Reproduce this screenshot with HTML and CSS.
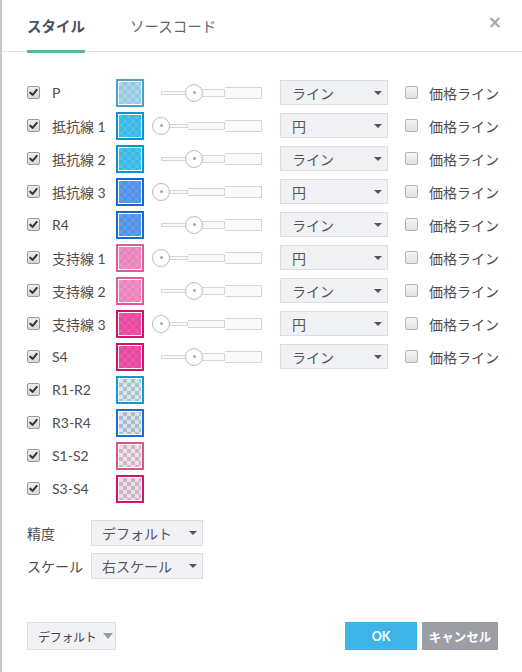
FILE: index.html
```html
<!DOCTYPE html>
<html lang="ja">
<head>
  <meta charset="UTF-8" />
  <title>スタイル</title>
  <link rel="stylesheet" href="styles.css">
</head>
<body>
  <div class="dialog">
    <div class="header">
      <div class="tab active">スタイル</div>
      <div class="tab">ソースコード</div>
      <div class="close">×</div>
    </div>

    <div class="content">
      <div class="rows">
        <!-- P -->
        <span class="cb on"><svg viewBox="0 0 12 12"><path d="M2.5 6.2 L5 8.6 L9.6 3.2" /></svg></span>
        <span class="label">P</span>
        <span class="swatch sw-p"></span>
        <div class="slider"><div class="track"><i class="s1"></i><i class="s2"></i><i class="s3"></i></div><span class="thumb mid"></span></div>
        <div class="select">ライン<span class="caret"></span></div>
        <span></span>
        <span class="cb"></span>
        <span class="label">価格ライン</span>

        <!-- 抵抗線 1 -->
        <span class="cb on"><svg viewBox="0 0 12 12"><path d="M2.5 6.2 L5 8.6 L9.6 3.2" /></svg></span>
        <span class="label">抵抗線 1</span>
        <span class="swatch sw-r"></span>
        <div class="slider"><div class="track"><i class="s1"></i><i class="s2"></i><i class="s3"></i></div><span class="thumb"></span></div>
        <div class="select">円<span class="caret"></span></div>
        <span></span>
        <span class="cb"></span>
        <span class="label">価格ライン</span>

        <!-- 抵抗線 2 -->
        <span class="cb on"><svg viewBox="0 0 12 12"><path d="M2.5 6.2 L5 8.6 L9.6 3.2" /></svg></span>
        <span class="label">抵抗線 2</span>
        <span class="swatch sw-r"></span>
        <div class="slider"><div class="track"><i class="s1"></i><i class="s2"></i><i class="s3"></i></div><span class="thumb mid"></span></div>
        <div class="select">ライン<span class="caret"></span></div>
        <span></span>
        <span class="cb"></span>
        <span class="label">価格ライン</span>

        <!-- 抵抗線 3 -->
        <span class="cb on"><svg viewBox="0 0 12 12"><path d="M2.5 6.2 L5 8.6 L9.6 3.2" /></svg></span>
        <span class="label">抵抗線 3</span>
        <span class="swatch sw-r3"></span>
        <div class="slider"><div class="track"><i class="s1"></i><i class="s2"></i><i class="s3"></i></div><span class="thumb"></span></div>
        <div class="select">円<span class="caret"></span></div>
        <span></span>
        <span class="cb"></span>
        <span class="label">価格ライン</span>

        <!-- R4 -->
        <span class="cb on"><svg viewBox="0 0 12 12"><path d="M2.5 6.2 L5 8.6 L9.6 3.2" /></svg></span>
        <span class="label">R4</span>
        <span class="swatch sw-r3"></span>
        <div class="slider"><div class="track"><i class="s1"></i><i class="s2"></i><i class="s3"></i></div><span class="thumb mid"></span></div>
        <div class="select">ライン<span class="caret"></span></div>
        <span></span>
        <span class="cb"></span>
        <span class="label">価格ライン</span>

        <!-- 支持線 1 -->
        <span class="cb on"><svg viewBox="0 0 12 12"><path d="M2.5 6.2 L5 8.6 L9.6 3.2" /></svg></span>
        <span class="label">支持線 1</span>
        <span class="swatch sw-s"></span>
        <div class="slider"><div class="track"><i class="s1"></i><i class="s2"></i><i class="s3"></i></div><span class="thumb"></span></div>
        <div class="select">円<span class="caret"></span></div>
        <span></span>
        <span class="cb"></span>
        <span class="label">価格ライン</span>

        <!-- 支持線 2 -->
        <span class="cb on"><svg viewBox="0 0 12 12"><path d="M2.5 6.2 L5 8.6 L9.6 3.2" /></svg></span>
        <span class="label">支持線 2</span>
        <span class="swatch sw-s"></span>
        <div class="slider"><div class="track"><i class="s1"></i><i class="s2"></i><i class="s3"></i></div><span class="thumb mid"></span></div>
        <div class="select">ライン<span class="caret"></span></div>
        <span></span>
        <span class="cb"></span>
        <span class="label">価格ライン</span>

        <!-- 支持線 3 -->
        <span class="cb on"><svg viewBox="0 0 12 12"><path d="M2.5 6.2 L5 8.6 L9.6 3.2" /></svg></span>
        <span class="label">支持線 3</span>
        <span class="swatch sw-s3"></span>
        <div class="slider"><div class="track"><i class="s1"></i><i class="s2"></i><i class="s3"></i></div><span class="thumb"></span></div>
        <div class="select">円<span class="caret"></span></div>
        <span></span>
        <span class="cb"></span>
        <span class="label">価格ライン</span>

        <!-- S4 -->
        <span class="cb on"><svg viewBox="0 0 12 12"><path d="M2.5 6.2 L5 8.6 L9.6 3.2" /></svg></span>
        <span class="label">S4</span>
        <span class="swatch sw-s3"></span>
        <div class="slider"><div class="track"><i class="s1"></i><i class="s2"></i><i class="s3"></i></div><span class="thumb mid"></span></div>
        <div class="select">ライン<span class="caret"></span></div>
        <span></span>
        <span class="cb"></span>
        <span class="label">価格ライン</span>

        <!-- fills -->
        <span class="cb on"><svg viewBox="0 0 12 12"><path d="M2.5 6.2 L5 8.6 L9.6 3.2" /></svg></span>
        <span class="label">R1-R2</span>
        <span class="swatch fill fill-r1"></span>
        <span class="rest"></span>

        <span class="cb on"><svg viewBox="0 0 12 12"><path d="M2.5 6.2 L5 8.6 L9.6 3.2" /></svg></span>
        <span class="label">R3-R4</span>
        <span class="swatch fill fill-r3"></span>
        <span class="rest"></span>

        <span class="cb on"><svg viewBox="0 0 12 12"><path d="M2.5 6.2 L5 8.6 L9.6 3.2" /></svg></span>
        <span class="label">S1-S2</span>
        <span class="swatch fill fill-s1"></span>
        <span class="rest"></span>

        <span class="cb on"><svg viewBox="0 0 12 12"><path d="M2.5 6.2 L5 8.6 L9.6 3.2" /></svg></span>
        <span class="label">S3-S4</span>
        <span class="swatch fill fill-s3"></span>
        <span class="rest"></span>
      </div>

      <div class="options">
        <span class="label">精度</span>
        <div class="select wide">デフォルト<span class="caret"></span></div>
        <span class="label">スケール</span>
        <div class="select wide">右スケール<span class="caret"></span></div>
      </div>
    </div>

    <div class="footer">
      <div class="btn-default">デフォルト<span class="caret light"></span></div>
      <div class="actions">
        <button class="btn ok">OK</button>
        <button class="btn cancel">キャンセル</button>
      </div>
    </div>
  </div>
</body>
</html>
```

FILE: styles.css
```css
body {
  margin: 0;
  font-family: Lato, "Noto Sans CJK JP", sans-serif;
  font-size: 14px;
  color: #4d4d4d;
  background: #fff;
}
.dialog {
  height: 672px;
  box-sizing: border-box;
  border-left: 2px solid #c6c6c6;
  display: flex;
  flex-direction: column;
}

/* header */
.header {
  height: 51px;
  border-bottom: 1px solid #e1e1e1;
  display: flex;
  align-items: stretch;
  padding: 0 20px 0 25px;
}
.tab {
  display: flex;
  align-items: center;
  padding-top: 1px;
  margin-right: 45px;
  font-size: 14.5px;
  color: #666;
  border-bottom: 3px solid transparent;
  margin-bottom: -2px;
}
.tab.active {
  font-weight: bold;
  color: #4a5262;
  border-bottom-color: #5ab98b;
}
.close {
  margin-left: auto;
  margin-top: 12px;
  font-size: 17px;
  font-weight: bold;
  color: #a8a8a8;
  font-family: "DejaVu Sans", sans-serif;
}

/* rows */
.content {
  padding: 24px 0 0 25px;
}
.rows {
  display: grid;
  grid-template-columns: 25px 64px 28px 136px 108px 17px 24px auto;
  grid-auto-rows: 33px;
  align-items: center;
}
.rest { grid-column: span 5; }
.label { white-space: nowrap; }

.cb {
  width: 11px;
  height: 11px;
  border: 1px solid #b4b4b4;
  border-radius: 2px;
  background: linear-gradient(#f4f4f4, #e2e2e2);
  display: block;
}
.cb.on { border-color: #9a9a9a; background: linear-gradient(#eee, #d8d8d8); }
.cb svg { display: block; width: 11px; height: 11px; }
.cb path {
  fill: none;
  stroke: #333;
  stroke-width: 2.2;
  stroke-linecap: round;
  stroke-linejoin: round;
}

.swatch {
  width: 28px;
  height: 28px;
  box-sizing: border-box;
  border: 2px solid var(--bd);
  padding: 1px;
  background-clip: content-box;
  background-color: var(--fill);
  background-image: conic-gradient(var(--sq) 25%, transparent 0 50%, var(--sq) 0 75%, transparent 0);
  background-size: 8px 8px;
  background-origin: content-box;
  outline: 1px solid #fff;
  outline-offset: -3px;
}
.sw-p  { --bd: #4aa0c8; --fill: #a6d7ec; --sq: rgba(0,0,0,0.07); }
.sw-r  { --bd: #0a93d2; --fill: #45c4f1; --sq: rgba(0,0,0,0.07); }
.sw-r3 { --bd: #1569d6; --fill: #5c9cf2; --sq: rgba(0,0,0,0.07); }
.sw-s  { --bd: #de5a9c; --fill: #f28ec4; --sq: rgba(0,0,0,0.06); }
.sw-s3 { --bd: #d2116a; --fill: #f253a8; --sq: rgba(0,0,0,0.07); }
.fill-r1 { --bd: #1a97d0; --fill: #d7e9f0; --sq: rgba(0,0,0,0.17); }
.fill-r3 { --bd: #166ed8; --fill: #d3e3f1; --sq: rgba(0,0,0,0.17); }
.fill-s1 { --bd: #d9538c; --fill: #f1e0ea; --sq: rgba(0,0,0,0.16); }
.fill-s3 { --bd: #d5136c; --fill: #f0dbe9; --sq: rgba(0,0,0,0.16); }

/* line width slider */
.slider {
  position: relative;
  width: 110px;
  height: 20px;
  margin-left: 8px;
  display: flex;
  align-items: center;
}
.track {
  display: flex;
  align-items: center;
  margin-left: 9px;
}
.track i {
  display: block;
  box-sizing: border-box;
  width: 37px;
  background: #fafafa;
  border: 1px solid #d6d6d6;
}
.track .s1 { width: 27px; height: 4px; }
.track .s2 { height: 8px; border-left: none; }
.track .s3 { height: 12px; border-left: none; }
.thumb {
  position: absolute;
  top: 1px;
  left: 0;
  width: 18px;
  height: 18px;
  box-sizing: border-box;
  border: 1px solid #b9bcc6;
  border-radius: 50%;
  background: #fff;
}
.thumb::after {
  content: "";
  position: absolute;
  left: 6.5px;
  top: 6.5px;
  width: 3px;
  height: 3px;
  border-radius: 50%;
  background: #a4a7b0;
}
.thumb.mid { left: 33px; }

/* selects */
.select {
  height: 25px;
  box-sizing: border-box;
  border: 1px solid #dcdee4;
  background: #f1f2f6;
  display: flex;
  align-items: center;
  padding: 0 5px 0 11px;
  color: #555;
  white-space: nowrap;
}
.caret {
  margin-left: auto;
  width: 0;
  height: 0;
  border-left: 4px solid transparent;
  border-right: 4px solid transparent;
  border-top: 4px solid #555;
}
.caret.light {
  border-top-color: #9a9a9a;
  border-left-width: 5px;
  border-right-width: 5px;
  border-top-width: 6px;
  margin-left: 6px;
}

.options {
  display: grid;
  grid-template-columns: 64px 112px;
  grid-auto-rows: 26px;
  row-gap: 7px;
  align-items: center;
  margin-top: 15px;
}
.options .select { padding-left: 10px; height: 26px; }

/* footer */
.footer {
  margin-top: auto;
  display: flex;
  align-items: center;
  justify-content: space-between;
  padding: 0 24px 22px 25px;
}
.btn-default {
  height: 28px;
  box-sizing: border-box;
  width: 89px;
  border: 1px solid #dcdee4;
  background: #f1f2f6;
  display: flex;
  align-items: center;
  padding-left: 10px;
  font-size: 12px;
  letter-spacing: -0.3px;
  color: #444;
  white-space: nowrap;
}
.actions { display: flex; gap: 5px; }
.btn {
  height: 28px;
  border: none;
  color: #fff;
  font-family: Lato, "Noto Sans CJK JP", sans-serif;
  font-weight: bold;
  font-size: 12.5px;
  padding: 0;
}
.ok { width: 72px; background: #3db4e5; }
.cancel { width: 76px; background: #9c9ea5; }
```
